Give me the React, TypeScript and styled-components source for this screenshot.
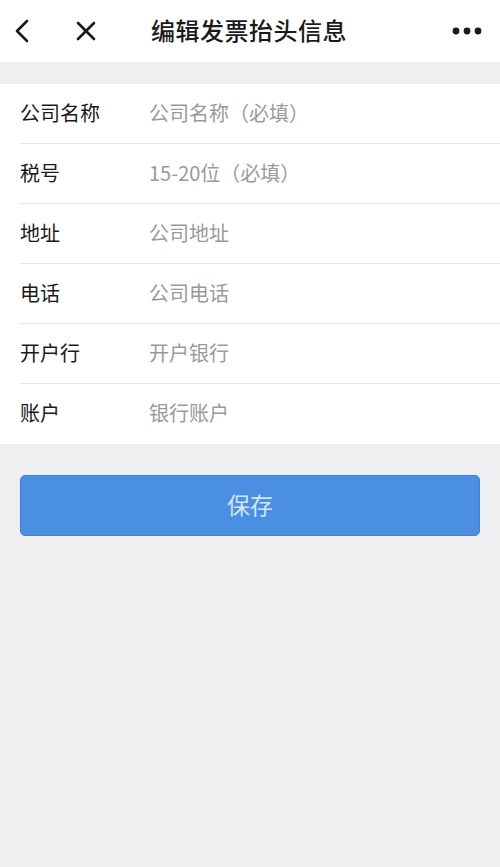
import React from 'react'
import styled, { createGlobalStyle } from 'styled-components';

const variables = {
  bg: '#efeff1',
  white: '#ffffff',
  text: '#1a1a1a',
  placeholder: '#9a9a9a',
  divider: '#e8e8e8',
  blue: '#4a8fe2',
  buttonText: '#d3e6fa',
  font: '"Noto Sans CJK SC", "Noto Sans", sans-serif'
};

const GlobalStyle = createGlobalStyle`
  html, body {
    margin: 0;
    padding: 0;
    background: ${ variables.bg };
    font-family: ${ variables.font };
  }
`;

const Page = styled.div`
  min-height: 867px;
  background: ${ variables.bg };
`;

const Header = styled.div`
  height: 62px;
  background: ${ variables.white };
  display: flex;
  align-items: center;
  padding: 0 14px;
  box-sizing: border-box;
`;

const IconBtn = styled.div<{ width: number }>`
  width: ${ props => props.width }px;
  display: flex;
  align-items: center;
  color: #1a1a1a;
`;

const Title = styled.div`
  flex: 1;
  font-size: 24px;
  font-weight: 500;
  color: ${ variables.text };
  padding-left: 51px;
  letter-spacing: 0.5px;
  line-height: 1;
  padding-bottom: 2px;
`;

const List = styled.div`
  margin-top: 22px;
  background: ${ variables.white };
  padding-left: 20px;
`;

const Row = styled.div<{ last?: boolean }>`
  height: 60px;
  display: flex;
  align-items: center;
  padding-bottom: 3px;
  border-bottom: ${ props => props.last ? 'none' : `1px solid ${ variables.divider }` };
  box-sizing: border-box;
`;

const Label = styled.span`
  width: 129px;
  font-size: 20px;
  color: ${ variables.text };
`;

const Placeholder = styled.span`
  font-size: 20px;
  color: ${ variables.placeholder };
`;

const SaveButton = styled.button`
  display: block;
  margin: 31px 20px 0;
  width: calc(100% - 40px);
  height: 61px;
  padding-bottom: 4px;
  border: 1px solid #3f82d4;
  border-radius: 5px;
  background: ${ variables.blue };
  color: ${ variables.buttonText };
  font-family: ${ variables.font };
  font-size: 23px;
`;

const fields = [
  { label: '公司名称', placeholder: '公司名称（必填）' },
  { label: '税号', placeholder: '15-20位（必填）' },
  { label: '地址', placeholder: '公司地址' },
  { label: '电话', placeholder: '公司电话' },
  { label: '开户行', placeholder: '开户银行' },
  { label: '账户', placeholder: '银行账户' }
];

export default function App() {
  return <>
    <GlobalStyle />
    <Page>
      <Header>
        <IconBtn width={ 62 }>
          <svg width="16" height="24" viewBox="0 0 16 24" fill="none" stroke="currentColor" strokeWidth="2.6" strokeLinecap="round" strokeLinejoin="round">
            <path d="M13 2 L3 12 L13 22" />
          </svg>
        </IconBtn>
        <IconBtn width={ 24 }>
          <svg width="20" height="20" viewBox="0 0 20 20" fill="none" stroke="currentColor" strokeWidth="2.6" strokeLinecap="round">
            <path d="M2 2 L18 18 M18 2 L2 18" />
          </svg>
        </IconBtn>
        <Title>编辑发票抬头信息</Title>
        <IconBtn width={ 34 }>
          <svg width="30" height="8" viewBox="0 0 30 8" fill="currentColor">
            <circle cx="4" cy="4" r="3.4" />
            <circle cx="15" cy="4" r="3.4" />
            <circle cx="26" cy="4" r="3.4" />
          </svg>
        </IconBtn>
      </Header>
      <List>
        { fields.map((f, i) => (
          <Row key={ f.label } last={ i === fields.length - 1 }>
            <Label>{ f.label }</Label>
            <Placeholder>{ f.placeholder }</Placeholder>
          </Row>
        )) }
      </List>
      <SaveButton>保存</SaveButton>
    </Page>
  </>
}
